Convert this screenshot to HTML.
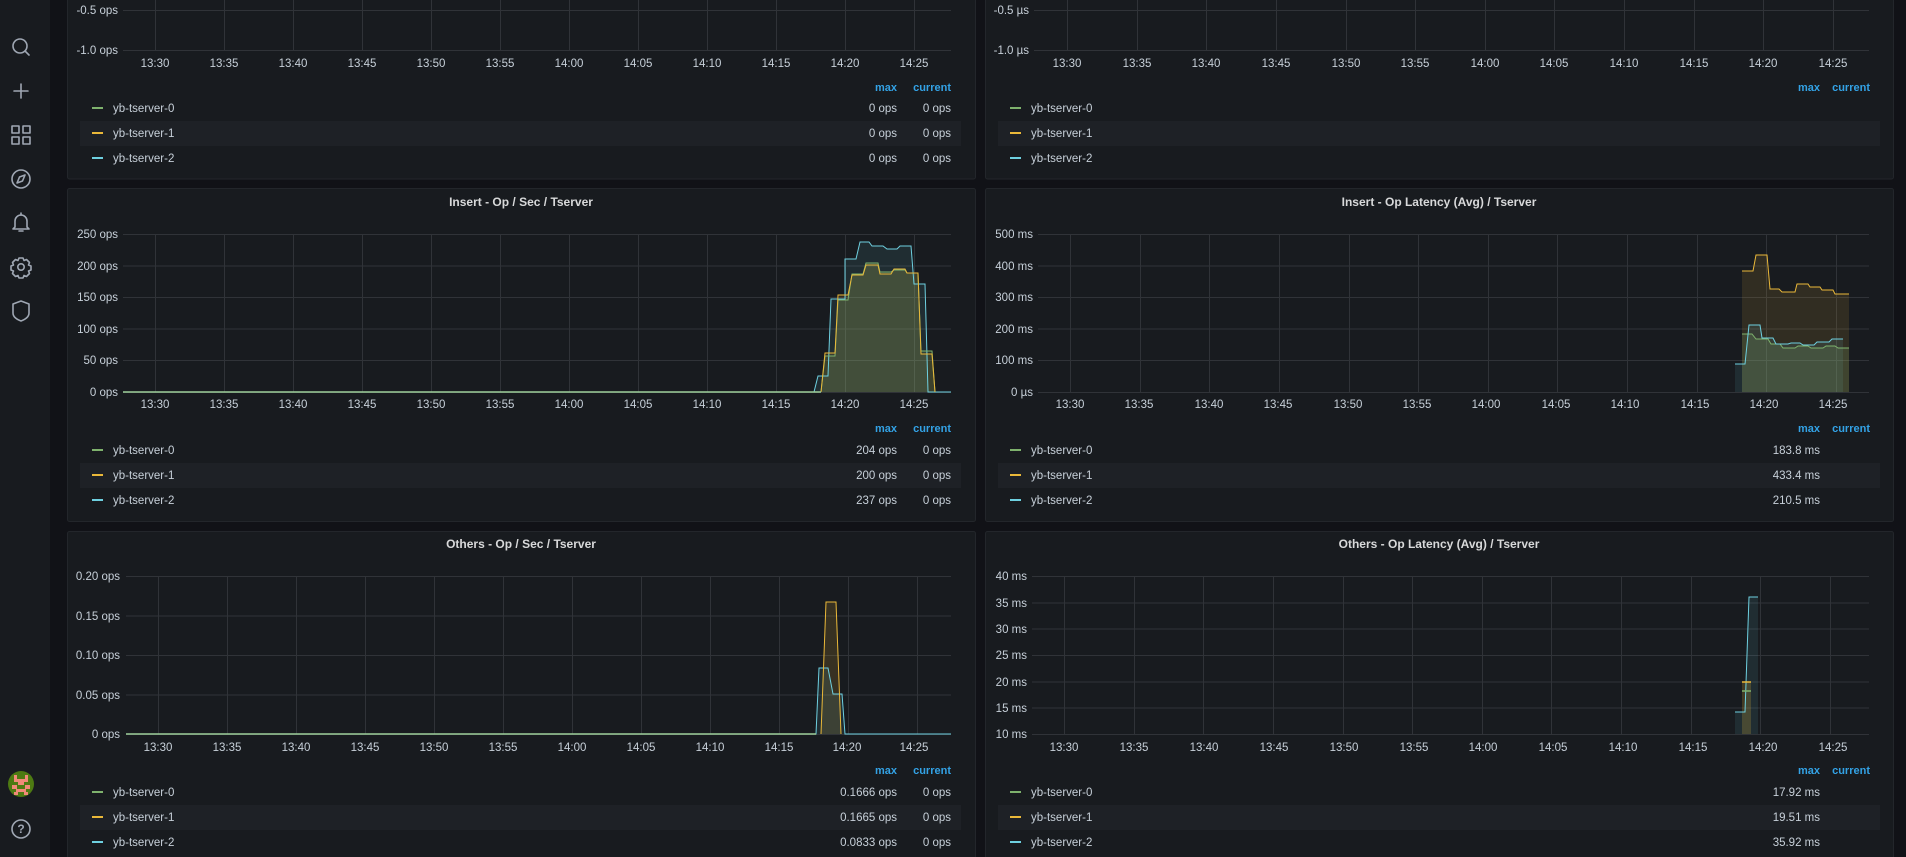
<!DOCTYPE html>
<html><head><meta charset="utf-8"><style>
html,body{margin:0;padding:0;background:#111217;overflow:hidden;width:1906px;height:857px}
svg{display:block}
text{font-family:"Liberation Sans",sans-serif;font-size:11.5px;fill:#c7d0d9}
.t{font-size:12px;font-weight:bold;fill:#d8d9da;text-anchor:middle}
.ax{text-anchor:end}
.xl text{text-anchor:middle}
.h{fill:#33a2e5;font-weight:bold;font-size:11px;text-anchor:end}
.v{text-anchor:end}
.g line{stroke:#303338;stroke-width:1}
.ic{fill:none;stroke:#9fa7b3;stroke-width:1.6;stroke-linecap:round;stroke-linejoin:round}
</style></head><body>
<svg width="1906" height="857" viewBox="0 0 1906 857" xmlns="http://www.w3.org/2000/svg">
<rect x="0" y="0" width="50" height="857" fill="#181b1f"/>
<g class="ic">
<circle cx="20" cy="46" r="7"/><line x1="25" y1="51" x2="29" y2="55"/>
<line x1="21" y1="84" x2="21" y2="98"/><line x1="14" y1="91" x2="28" y2="91"/>
<rect x="12" y="126" width="7" height="7"/><rect x="23" y="126" width="7" height="7"/><rect x="12" y="137" width="7" height="7"/><rect x="23" y="137" width="7" height="7"/>
<circle cx="21" cy="179" r="9"/><path d="M25 175 L22.5 181 L17 183 L19.5 177 Z"/>
<path d="M15 227 V221 a6 6 0 0 1 12 0 V227 L29 229 H13 Z M19 231 h4"/><line x1="21" y1="213" x2="21" y2="215"/>
<circle cx="21" cy="267" r="3.2"/><path d="M19 258 h4 l1 2.5 l2.5-1 l3 3 l-1 2.5 l2.5 1 v4 l-2.5 1 l1 2.5 l-3 3 l-2.5-1 l-1 2.5 h-4 l-1-2.5 l-2.5 1 l-3-3 l1-2.5 l-2.5-1 v-4 l2.5-1 l-1-2.5 l3-3 l2.5 1 Z"/>
<path d="M13 304 L21 301 L29 304 V313 Q29 318 21 321 Q13 318 13 313 Z"/>
<circle cx="21" cy="829" r="9"/>
</g>
<text x="21" y="833" style="fill:#9fa7b3;font-size:12px;font-weight:bold;text-anchor:middle">?</text>
<circle cx="21" cy="784" r="13" fill="#4d7a12"/>
<g fill="#f08a78"><rect x="14" y="775" width="3" height="7"/><rect x="25" y="775" width="3" height="7"/><rect x="17" y="779" width="8" height="3"/><rect x="18" y="782" width="6" height="3"/><rect x="12" y="785" width="5" height="4"/><rect x="25" y="785" width="5" height="4"/><rect x="16" y="789" width="10" height="3"/><rect x="14" y="792" width="4" height="3"/><rect x="24" y="792" width="4" height="3"/></g>

<g fill="#181b1f" stroke="#23262b">
<rect x="67.5" y="-10" width="908" height="189" rx="2"/>
<rect x="985.5" y="-10" width="908" height="189" rx="2"/>
<rect x="67.5" y="188.5" width="908" height="333" rx="2"/>
<rect x="985.5" y="188.5" width="908" height="333" rx="2"/>
<rect x="67.5" y="531.5" width="908" height="340" rx="2"/>
<rect x="985.5" y="531.5" width="908" height="340" rx="2"/>
</g>
<g fill="#1e2126">
<rect x="80" y="121" width="881" height="25"/><rect x="998" y="121" width="882" height="25"/>
<rect x="80" y="463" width="881" height="25"/><rect x="998" y="463" width="882" height="25"/>
<rect x="80" y="805" width="881" height="25"/><rect x="998" y="805" width="882" height="25"/>
</g>

<g class="g">
<line x1="123" y1="10.5" x2="951" y2="10.5"/><line x1="123" y1="50.5" x2="951" y2="50.5"/>
<line x1="1034" y1="10.5" x2="1869" y2="10.5"/><line x1="1034" y1="50.5" x2="1869" y2="50.5"/>
<g id="vl"><line x1="155.5" y1="0" x2="155.5" y2="50"/><line x1="224.5" y1="0" x2="224.5" y2="50"/><line x1="293.5" y1="0" x2="293.5" y2="50"/><line x1="362.5" y1="0" x2="362.5" y2="50"/><line x1="431.5" y1="0" x2="431.5" y2="50"/><line x1="500.5" y1="0" x2="500.5" y2="50"/><line x1="569.5" y1="0" x2="569.5" y2="50"/><line x1="638.5" y1="0" x2="638.5" y2="50"/><line x1="707.5" y1="0" x2="707.5" y2="50"/><line x1="776.5" y1="0" x2="776.5" y2="50"/><line x1="845.5" y1="0" x2="845.5" y2="50"/><line x1="914.5" y1="0" x2="914.5" y2="50"/></g>
<g id="vr"><line x1="1067.5" y1="0" x2="1067.5" y2="50"/><line x1="1137.5" y1="0" x2="1137.5" y2="50"/><line x1="1206.5" y1="0" x2="1206.5" y2="50"/><line x1="1276.5" y1="0" x2="1276.5" y2="50"/><line x1="1346.5" y1="0" x2="1346.5" y2="50"/><line x1="1415.5" y1="0" x2="1415.5" y2="50"/><line x1="1485.5" y1="0" x2="1485.5" y2="50"/><line x1="1554.5" y1="0" x2="1554.5" y2="50"/><line x1="1624.5" y1="0" x2="1624.5" y2="50"/><line x1="1694.5" y1="0" x2="1694.5" y2="50"/><line x1="1763.5" y1="0" x2="1763.5" y2="50"/><line x1="1833.5" y1="0" x2="1833.5" y2="50"/></g>
</g>
<text class="ax" x="118" y="14">-0.5 ops</text><text class="ax" x="118" y="54">-1.0 ops</text>
<text class="ax" x="1029" y="14">-0.5 µs</text><text class="ax" x="1029" y="54">-1.0 µs</text>
<g class="xl"><text x="155" y="67">13:30</text><text x="224" y="67">13:35</text><text x="293" y="67">13:40</text><text x="362" y="67">13:45</text><text x="431" y="67">13:50</text><text x="500" y="67">13:55</text><text x="569" y="67">14:00</text><text x="638" y="67">14:05</text><text x="707" y="67">14:10</text><text x="776" y="67">14:15</text><text x="845" y="67">14:20</text><text x="914" y="67">14:25</text></g>
<g class="xl"><text x="1067" y="67">13:30</text><text x="1137" y="67">13:35</text><text x="1206" y="67">13:40</text><text x="1276" y="67">13:45</text><text x="1346" y="67">13:50</text><text x="1415" y="67">13:55</text><text x="1485" y="67">14:00</text><text x="1554" y="67">14:05</text><text x="1624" y="67">14:10</text><text x="1694" y="67">14:15</text><text x="1763" y="67">14:20</text><text x="1833" y="67">14:25</text></g>
<text class="h" x="897" y="91">max</text><text class="h" x="951" y="91">current</text>
<text class="h" x="1820" y="91">max</text><text class="h" x="1870" y="91">current</text>
<g>
<rect x="92" y="107" width="11" height="2" fill="#7eb26d"/><rect x="92" y="132" width="11" height="2" fill="#eab839"/><rect x="92" y="157" width="11" height="2" fill="#6ed0e0"/>
<text x="113" y="112">yb-tserver-0</text><text x="113" y="137">yb-tserver-1</text><text x="113" y="162">yb-tserver-2</text>
<text class="v" x="897" y="112">0 ops</text><text class="v" x="951" y="112">0 ops</text>
<text class="v" x="897" y="137">0 ops</text><text class="v" x="951" y="137">0 ops</text>
<text class="v" x="897" y="162">0 ops</text><text class="v" x="951" y="162">0 ops</text>
<rect x="1010" y="107" width="11" height="2" fill="#7eb26d"/><rect x="1010" y="132" width="11" height="2" fill="#eab839"/><rect x="1010" y="157" width="11" height="2" fill="#6ed0e0"/>
<text x="1031" y="112">yb-tserver-0</text><text x="1031" y="137">yb-tserver-1</text><text x="1031" y="162">yb-tserver-2</text>
</g>

<text class="t" x="521" y="206">Insert - Op / Sec / Tserver</text>
<text class="t" x="1439" y="206">Insert - Op Latency (Avg) / Tserver</text>
<g class="g">
<line x1="123" y1="234.5" x2="951" y2="234.5"/><line x1="123" y1="266" x2="951" y2="266"/><line x1="123" y1="297.5" x2="951" y2="297.5"/><line x1="123" y1="329" x2="951" y2="329"/><line x1="123" y1="360.5" x2="951" y2="360.5"/><line x1="123" y1="392.5" x2="951" y2="392.5"/>
<line x1="1038" y1="234.5" x2="1869" y2="234.5"/><line x1="1038" y1="266" x2="1869" y2="266"/><line x1="1038" y1="297.5" x2="1869" y2="297.5"/><line x1="1038" y1="329" x2="1869" y2="329"/><line x1="1038" y1="360.5" x2="1869" y2="360.5"/><line x1="1038" y1="392.5" x2="1869" y2="392.5"/>
<use href="#vl" transform="translate(0,234) scale(1,3.16)"/>
<use href="#vr" transform="translate(3,234) scale(1,3.16)"/>
</g>
<g class="ax"><text x="118" y="238">250 ops</text><text x="118" y="270">200 ops</text><text x="118" y="301">150 ops</text><text x="118" y="333">100 ops</text><text x="118" y="364">50 ops</text><text x="118" y="396">0 ops</text>
<text x="1033" y="238">500 ms</text><text x="1033" y="270">400 ms</text><text x="1033" y="301">300 ms</text><text x="1033" y="333">200 ms</text><text x="1033" y="364">100 ms</text><text x="1033" y="396">0 µs</text></g>
<g class="xl"><text x="155" y="408">13:30</text><text x="224" y="408">13:35</text><text x="293" y="408">13:40</text><text x="362" y="408">13:45</text><text x="431" y="408">13:50</text><text x="500" y="408">13:55</text><text x="569" y="408">14:00</text><text x="638" y="408">14:05</text><text x="707" y="408">14:10</text><text x="776" y="408">14:15</text><text x="845" y="408">14:20</text><text x="914" y="408">14:25</text>
<text x="1070" y="408">13:30</text><text x="1139" y="408">13:35</text><text x="1209" y="408">13:40</text><text x="1278" y="408">13:45</text><text x="1348" y="408">13:50</text><text x="1417" y="408">13:55</text><text x="1486" y="408">14:00</text><text x="1556" y="408">14:05</text><text x="1625" y="408">14:10</text><text x="1695" y="408">14:15</text><text x="1764" y="408">14:20</text><text x="1833" y="408">14:25</text></g>
<path d="M814 392 L818 376 H828 L831 299 H845 V259 H856 L860 242 H869 L872 246 H883 L887 249 H897 L900 246 H911 L914 284 H925 L928 392 Z" fill="#6ed0e0" fill-opacity="0.1"/>
<path d="M821 392 L825 353 H835 L838 295 H848 L852 275 H863 L866 265 H878 L880 274 H891 L894 269 H905 L907 273 H918 L921 354 H932 L935 392 Z" fill="#eab839" fill-opacity="0.12"/>
<path d="M821 392 L825 356 H835 L838 300 H848 L852 274 H863 L866 263 H878 L880 272 H891 L894 270 H905 L907 273 H918 L921 351 H932 L935 392 Z" fill="#7eb26d" fill-opacity="0.15"/>
<path d="M123 392 H814 L818 376 H828 L831 299 H845 V259 H856 L860 242 H869 L872 246 H883 L887 249 H897 L900 246 H911 L914 284 H925 L928 392 H951" fill="none" stroke="#6ed0e0" stroke-width="1"/>
<path d="M821 392 L825 356 H835 L838 300 H848 L852 274 H863 L866 263 H878 L880 272 H891 L894 270 H905 L907 273 H918 L921 351 H932 L935 392" fill="none" stroke="#7eb26d" stroke-width="1"/>
<path d="M821 392 L825 353 H835 L838 295 H848 L852 275 H863 L866 265 H878 L880 274 H891 L894 269 H905 L907 273 H918 L921 354 H932 L935 392" fill="none" stroke="#eab839" stroke-width="1"/>
<line x1="123" y1="392" x2="821" y2="392" stroke="#9ed09a" stroke-width="1.5"/>
<path d="M1742 392 V271 H1753 L1756 255 H1767 L1770 289 H1779 L1782 292 H1795 L1797 284 H1808 L1810 287 H1820 L1822 290 H1833 L1835 294 H1849 V392 Z" fill="#eab839" fill-opacity="0.12"/>
<path d="M1735 392 V364 H1745 L1749 325 H1760 L1762 338 H1773 L1776 344 H1788 L1791 343 H1800 L1803 345 H1814 L1817 342 H1829 L1832 339 H1843 V392 Z" fill="#6ed0e0" fill-opacity="0.1"/>
<path d="M1742 392 V334 H1752 L1756 339 H1768 L1771 344 H1780 L1783 348 H1795 L1798 346 H1808 L1811 348 H1823 L1826 346 H1835 L1838 348 H1849 V392 Z" fill="#7eb26d" fill-opacity="0.18"/>
<path d="M1742 271 H1753 L1756 255 H1767 L1770 289 H1779 L1782 292 H1795 L1797 284 H1808 L1810 287 H1820 L1822 290 H1833 L1835 294 H1849" fill="none" stroke="#eab839"/>
<path d="M1742 334 H1752 L1756 339 H1768 L1771 344 H1780 L1783 348 H1795 L1798 346 H1808 L1811 348 H1823 L1826 346 H1835 L1838 348 H1849" fill="none" stroke="#7eb26d"/>
<path d="M1735 364 H1745 L1749 325 H1760 L1762 338 H1773 L1776 344 H1788 L1791 343 H1800 L1803 345 H1814 L1817 342 H1829 L1832 339 H1843" fill="none" stroke="#6ed0e0"/>
<text class="h" x="897" y="432">max</text><text class="h" x="951" y="432">current</text>
<text class="h" x="1820" y="432">max</text><text class="h" x="1870" y="432">current</text>
<rect x="92" y="449" width="11" height="2" fill="#7eb26d"/><rect x="92" y="474" width="11" height="2" fill="#eab839"/><rect x="92" y="499" width="11" height="2" fill="#6ed0e0"/>
<text x="113" y="454">yb-tserver-0</text><text x="113" y="479">yb-tserver-1</text><text x="113" y="504">yb-tserver-2</text>
<text class="v" x="897" y="454">204 ops</text><text class="v" x="951" y="454">0 ops</text>
<text class="v" x="897" y="479">200 ops</text><text class="v" x="951" y="479">0 ops</text>
<text class="v" x="897" y="504">237 ops</text><text class="v" x="951" y="504">0 ops</text>
<rect x="1010" y="449" width="11" height="2" fill="#7eb26d"/><rect x="1010" y="474" width="11" height="2" fill="#eab839"/><rect x="1010" y="499" width="11" height="2" fill="#6ed0e0"/>
<text x="1031" y="454">yb-tserver-0</text><text x="1031" y="479">yb-tserver-1</text><text x="1031" y="504">yb-tserver-2</text>
<text class="v" x="1820" y="454">183.8 ms</text><text class="v" x="1820" y="479">433.4 ms</text><text class="v" x="1820" y="504">210.5 ms</text>

<text class="t" x="521" y="548">Others - Op / Sec / Tserver</text>
<text class="t" x="1439" y="548">Others - Op Latency (Avg) / Tserver</text>
<g class="g">
<line x1="126" y1="576.5" x2="951" y2="576.5"/><line x1="126" y1="616" x2="951" y2="616"/><line x1="126" y1="655.5" x2="951" y2="655.5"/><line x1="126" y1="695" x2="951" y2="695"/><line x1="126" y1="734.5" x2="951" y2="734.5"/>
<line x1="1032" y1="576.5" x2="1869" y2="576.5"/><line x1="1032" y1="603" x2="1869" y2="603"/><line x1="1032" y1="629" x2="1869" y2="629"/><line x1="1032" y1="655.5" x2="1869" y2="655.5"/><line x1="1032" y1="682" x2="1869" y2="682"/><line x1="1032" y1="708" x2="1869" y2="708"/><line x1="1032" y1="734.5" x2="1869" y2="734.5"/>
<use href="#vl" transform="translate(3,576) scale(1,3.16)"/>
<use href="#vr" transform="translate(-3,576) scale(1,3.16)"/>
</g>
<g class="ax"><text x="120" y="580">0.20 ops</text><text x="120" y="620">0.15 ops</text><text x="120" y="659">0.10 ops</text><text x="120" y="699">0.05 ops</text><text x="120" y="738">0 ops</text>
<text x="1027" y="580">40 ms</text><text x="1027" y="607">35 ms</text><text x="1027" y="633">30 ms</text><text x="1027" y="659">25 ms</text><text x="1027" y="686">20 ms</text><text x="1027" y="712">15 ms</text><text x="1027" y="738">10 ms</text></g>
<g class="xl"><text x="158" y="751">13:30</text><text x="227" y="751">13:35</text><text x="296" y="751">13:40</text><text x="365" y="751">13:45</text><text x="434" y="751">13:50</text><text x="503" y="751">13:55</text><text x="572" y="751">14:00</text><text x="641" y="751">14:05</text><text x="710" y="751">14:10</text><text x="779" y="751">14:15</text><text x="847" y="751">14:20</text><text x="914" y="751">14:25</text>
<text x="1064" y="751">13:30</text><text x="1134" y="751">13:35</text><text x="1204" y="751">13:40</text><text x="1274" y="751">13:45</text><text x="1344" y="751">13:50</text><text x="1414" y="751">13:55</text><text x="1483" y="751">14:00</text><text x="1553" y="751">14:05</text><text x="1623" y="751">14:10</text><text x="1693" y="751">14:15</text><text x="1763" y="751">14:20</text><text x="1833" y="751">14:25</text></g>
<path d="M821 734 L826 602 H836 L841 734 Z" fill="#eab839" fill-opacity="0.15"/>
<path d="M816 734 L819 668 H828 L833 694 H842 L845 734 Z" fill="#6ed0e0" fill-opacity="0.1"/>
<path d="M126 734 H816 L819 668 H828 L833 694 H842 L845 734 H951" fill="none" stroke="#6ed0e0"/>
<path d="M821 734 L826 602 H836 L841 734" fill="none" stroke="#eab839"/>
<line x1="126" y1="734" x2="816" y2="734" stroke="#9ed09a" stroke-width="1.5"/>
<path d="M1735 734 V712 H1745 L1749 597 H1758 V734 Z" fill="#6ed0e0" fill-opacity="0.1"/>
<path d="M1742 734 V682 H1751 V734 Z" fill="#eab839" fill-opacity="0.2"/>
<path d="M1735 712 H1745 L1749 597 H1758" fill="none" stroke="#6ed0e0"/>
<line x1="1742" y1="682" x2="1751" y2="682" stroke="#eab839" stroke-width="1.5"/>
<line x1="1742" y1="691" x2="1751" y2="691" stroke="#7eb26d" stroke-width="1.5"/>
<text class="h" x="897" y="774">max</text><text class="h" x="951" y="774">current</text>
<text class="h" x="1820" y="774">max</text><text class="h" x="1870" y="774">current</text>
<rect x="92" y="791" width="11" height="2" fill="#7eb26d"/><rect x="92" y="816" width="11" height="2" fill="#eab839"/><rect x="92" y="841" width="11" height="2" fill="#6ed0e0"/>
<text x="113" y="796">yb-tserver-0</text><text x="113" y="821">yb-tserver-1</text><text x="113" y="846">yb-tserver-2</text>
<text class="v" x="897" y="796">0.1666 ops</text><text class="v" x="951" y="796">0 ops</text>
<text class="v" x="897" y="821">0.1665 ops</text><text class="v" x="951" y="821">0 ops</text>
<text class="v" x="897" y="846">0.0833 ops</text><text class="v" x="951" y="846">0 ops</text>
<rect x="1010" y="791" width="11" height="2" fill="#7eb26d"/><rect x="1010" y="816" width="11" height="2" fill="#eab839"/><rect x="1010" y="841" width="11" height="2" fill="#6ed0e0"/>
<text x="1031" y="796">yb-tserver-0</text><text x="1031" y="821">yb-tserver-1</text><text x="1031" y="846">yb-tserver-2</text>
<text class="v" x="1820" y="796">17.92 ms</text><text class="v" x="1820" y="821">19.51 ms</text><text class="v" x="1820" y="846">35.92 ms</text>
</svg>
</body></html>
